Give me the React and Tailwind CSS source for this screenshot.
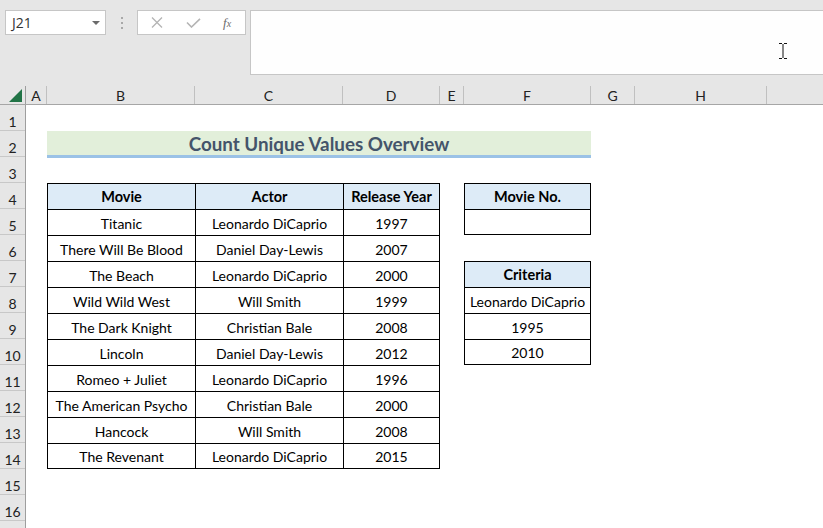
import React from "react";

const COLS = [
  { name: "A", w: "w-[21px]" },
  { name: "B", w: "w-[148px]" },
  { name: "C", w: "w-[148px]" },
  { name: "D", w: "w-[97px]" },
  { name: "E", w: "w-[24px]" },
  { name: "F", w: "w-[127px]" },
  { name: "G", w: "w-[44px]" },
  { name: "H", w: "w-[132px]" },
];

const MOVIES = [
  ["Titanic", "Leonardo DiCaprio", "1997"],
  ["There Will Be Blood", "Daniel Day-Lewis", "2007"],
  ["The Beach", "Leonardo DiCaprio", "2000"],
  ["Wild Wild West", "Will Smith", "1999"],
  ["The Dark Knight", "Christian Bale", "2008"],
  ["Lincoln", "Daniel Day-Lewis", "2012"],
  ["Romeo + Juliet", "Leonardo DiCaprio", "1996"],
  ["The American Psycho", "Christian Bale", "2000"],
  ["Hancock", "Will Smith", "2008"],
  ["The Revenant", "Leonardo DiCaprio", "2015"],
];

const ROWS = Array.from({ length: 16 }, (_, i) => i + 1);

function clsxLite(...parts) {
  return parts.filter(Boolean).join(" ");
}

function Cell({ children, head, right, bottom }) {
  return (
    <div
      className={clsxLite(
        "flex items-center justify-center pt-[1px] border-l border-t border-black text-black",
        head ? "bg-[#ddebf7] font-bold text-[14.5px]" : "text-[14px]",
        right && "border-r",
        bottom && "border-b"
      )}
    >
      {children}
    </div>
  );
}

function Toolbar() {
  return (
    <div className="h-[86px] shrink-0 bg-[#e6e6e6] flex items-start pt-[10px] pl-[5px]">
      {/* name box */}
      <div className="w-[101px] h-[25px] bg-white border border-[#c6c6c6] flex items-center justify-between pl-[6px] pr-[5px]">
        <span className="text-[14px] text-[#333] font-['Open_Sans']">J21</span>
        <svg width="8" height="4" viewBox="0 0 8 4">
          <path d="M0 0h8L4 4z" fill="#6b6b6b" />
        </svg>
      </div>
      {/* grip dots */}
      <div className="w-[31px] h-[25px] flex flex-col items-center justify-center gap-[3px]">
        <span className="w-[2px] h-[2px] bg-[#a8a8a8]" />
        <span className="w-[2px] h-[2px] bg-[#a8a8a8]" />
        <span className="w-[2px] h-[2px] bg-[#a8a8a8]" />
      </div>
      {/* cancel / enter / fx */}
      <div className="w-[109px] h-[25px] bg-white border border-[#c6c6c6] flex items-center">
        <svg width="12" height="11" viewBox="0 0 12 11" className="ml-[13px]">
          <path d="M1 0.5L11 10.5M11 0.5L1 10.5" stroke="#b4b4b4" strokeWidth="1.3" />
        </svg>
        <svg width="15" height="10" viewBox="0 0 15 10" className="ml-[23px]">
          <path d="M1 4.5L5.5 9L14 0.8" stroke="#b4b4b4" strokeWidth="1.6" fill="none" />
        </svg>
        <span className="ml-[22px] text-[13px] italic text-[#6b6b6b] font-['Liberation_Serif'] leading-none">
          f<span className="text-[10px]">x</span>
        </span>
      </div>
      {/* formula bar */}
      <div className="relative flex-1 ml-[4px] h-[65px] bg-[#fefefe] border-l border-t border-b border-[#c6c6c6]">
        <svg
          width="8"
          height="16"
          viewBox="0 0 8 16"
          className="absolute left-[528px] top-[32px]"
        >
          <path d="M0 0.5h3M5 0.5h3M4 1v14M0 15.5h3M5 15.5h3" stroke="#111" strokeWidth="1" />
        </svg>
      </div>
    </div>
  );
}

function ColumnHeader() {
  return (
    <div className="h-[19px] shrink-0 flex bg-[#e6e6e6] border-b border-[#a6a6a6]">
      <div className="w-[26px] shrink-0 border-r border-[#9e9e9e] flex items-end justify-end pr-[3px] pb-[2px]">
        <svg width="13" height="13" viewBox="0 0 13 13">
          <path d="M13 0V13H0z" fill="#217346" />
        </svg>
      </div>
      {COLS.map((c) => (
        <div
          key={c.name}
          className={`${c.w} shrink-0 border-r border-[#c0c0c0] flex items-center justify-center text-[14px] text-[#222]`}
        >
          {c.name}
        </div>
      ))}
      <div className="flex-1" />
    </div>
  );
}

export default function App() {
  return (
    <div className="w-[823px] h-[528px] overflow-hidden bg-white flex flex-col font-['Lato',sans-serif]">
      <Toolbar />
      <ColumnHeader />
      <div className="flex flex-1 min-h-0">
        {/* row numbers */}
        <div className="w-[26px] shrink-0 flex flex-col bg-[#e6e6e6] border-r border-[#9e9e9e]">
          {ROWS.map((r) => (
            <div
              key={r}
              className="h-[26px] shrink-0 border-b border-[#c8c8c8] flex items-end justify-center pb-[1px] leading-none text-[14px] text-[#222]"
            >
              {r}
            </div>
          ))}
          <div className="flex-1" />
        </div>

        {/* sheet */}
        <div className="flex-1 grid grid-cols-[21px_148px_148px_97px_24px_127px_44px_132px_1fr] grid-rows-[repeat(16,26px)]">
          <div className="col-start-2 col-span-5 row-start-2 -mb-[1px] pt-[3px] bg-[#e2efda] border-b-[3px] border-[#9bc2e6] flex items-center justify-center text-[18.8px] font-bold text-[#44546a]">
            Count Unique Values Overview
          </div>

          <div className="col-start-2 col-span-3 row-start-4 row-span-11 grid grid-cols-[148px_148px_97px] grid-rows-[repeat(11,26px)]">
            <Cell head>Movie</Cell>
            <Cell head>Actor</Cell>
            <Cell head right>Release Year</Cell>
            {MOVIES.map((m, i) => {
              const last = i === MOVIES.length - 1;
              return (
                <React.Fragment key={m[0]}>
                  <Cell bottom={last}>{m[0]}</Cell>
                  <Cell bottom={last}>{m[1]}</Cell>
                  <Cell bottom={last} right>
                    {m[2]}
                  </Cell>
                </React.Fragment>
              );
            })}
          </div>

          <div className="col-start-6 row-start-4 row-span-2 grid grid-rows-[repeat(2,26px)]">
            <Cell head right>Movie No.</Cell>
            <Cell right bottom />
          </div>

          <div className="col-start-6 row-start-7 row-span-4 grid grid-rows-[repeat(4,26px)]">
            <Cell head right>Criteria</Cell>
            <Cell right>Leonardo DiCaprio</Cell>
            <Cell right>1995</Cell>
            <Cell right bottom>2010</Cell>
          </div>
        </div>
      </div>
    </div>
  );
}
